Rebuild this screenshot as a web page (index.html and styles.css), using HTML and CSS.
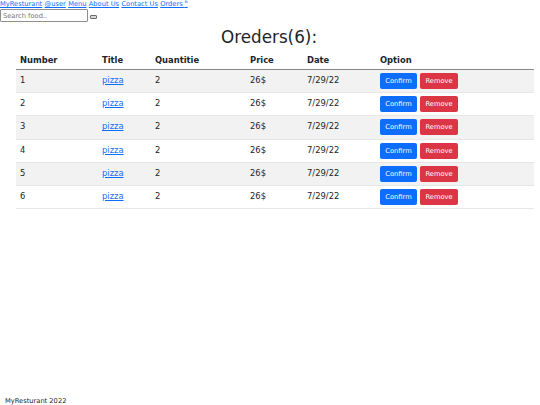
FILE: index.html
```html
<!DOCTYPE html>
<html lang="en">
<head>
<meta charset="utf-8">
<title>Orders</title>
<link rel="stylesheet" href="styles.css">
</head>
<body>
<div class="page">
  <header class="top">
    <nav class="nav">
      <a href="#">MyResturant</a>
      <a href="#">@user</a>
      <a href="#">Menu</a>
      <a href="#">About Us</a>
      <a href="#">Contact Us</a>
      <a href="#">Orders <sup>6</sup></a>
    </nav>
    <form class="search">
      <input class="search-input" type="text" placeholder="Search food..">
      <button class="search-btn" type="button"></button>
    </form>
  </header>
  <main class="main">
    <h1 class="title">Oreders(6):</h1>
    <table class="orders">
      <thead>
        <tr>
          <th class="c1">Number</th>
          <th class="c2">Title</th>
          <th class="c3">Quantitie</th>
          <th class="c4">Price</th>
          <th class="c5">Date</th>
          <th class="c6">Option</th>
        </tr>
      </thead>
      <tbody>
        <tr><td>1</td><td><a href="#">pizza</a></td><td>2</td><td>26$</td><td>7/29/22</td><td><div class="btns"><button class="btn confirm">Confirm</button><button class="btn remove">Remove</button></div></td></tr>
        <tr><td>2</td><td><a href="#">pizza</a></td><td>2</td><td>26$</td><td>7/29/22</td><td><div class="btns"><button class="btn confirm">Confirm</button><button class="btn remove">Remove</button></div></td></tr>
        <tr><td>3</td><td><a href="#">pizza</a></td><td>2</td><td>26$</td><td>7/29/22</td><td><div class="btns"><button class="btn confirm">Confirm</button><button class="btn remove">Remove</button></div></td></tr>
        <tr><td>4</td><td><a href="#">pizza</a></td><td>2</td><td>26$</td><td>7/29/22</td><td><div class="btns"><button class="btn confirm">Confirm</button><button class="btn remove">Remove</button></div></td></tr>
        <tr><td>5</td><td><a href="#">pizza</a></td><td>2</td><td>26$</td><td>7/29/22</td><td><div class="btns"><button class="btn confirm">Confirm</button><button class="btn remove">Remove</button></div></td></tr>
        <tr><td>6</td><td><a href="#">pizza</a></td><td>2</td><td>26$</td><td>7/29/22</td><td><div class="btns"><button class="btn confirm">Confirm</button><button class="btn remove">Remove</button></div></td></tr>
      </tbody>
    </table>
  </main>
  <footer class="footer">MyResturant 2022</footer>
</div>
</body>
</html>
```
FILE: styles.css
```css
html, body {
  margin: 0;
  padding: 0;
}
body {
  font-family: "DejaVu Sans", sans-serif;
  color: #212529;
  background: #fff;
  font-size: 8.4px;
}
.page {
  height: 405px;
  display: flex;
  flex-direction: column;
}
.top {
  display: flex;
  flex-direction: column;
  align-items: flex-start;
}
.nav {
  font-size: 6.7px;
  line-height: 9px;
  display: flex;
  gap: 2.3px;
}
.nav a {
  color: #0d6efd;
  text-decoration: underline;
}
.nav sup {
  font-size: 4.5px;
  vertical-align: 3px;
  line-height: 0;
}
.search {
  display: flex;
  align-items: flex-end;
  gap: 2px;
  margin: 0;
}
.search-input {
  box-sizing: border-box;
  width: 88px;
  height: 13px;
  margin: 0;
  padding: 0 2px;
  border: 1px solid #8f8f8f;
  border-radius: 1px;
  font-family: "DejaVu Sans", sans-serif;
  font-size: 6.7px;
  color: #212529;
}
.search-input::placeholder {
  color: #757575;
}
.search-btn {
  box-sizing: border-box;
  width: 7px;
  height: 4px;
  margin: 0 0 3px 0;
  padding: 0;
  border: 1px solid #6b6b6b;
  border-radius: 1px;
  background: #d9d9d9;
}
.main {
  flex: 1;
}
.title {
  margin: 3px 0 0 0;
  padding-right: 2px;
  text-align: center;
  font-weight: 400;
  font-size: 16.8px;
  line-height: 24px;
}
.orders {
  width: 518px;
  border-collapse: collapse;
  margin: 1px 0 0 16px;
}
.orders th,
.orders td {
  text-align: left;
  padding: 4px 4px 0 4px;
  line-height: 12px;
  vertical-align: top;
}
.orders th {
  font-weight: 700;
  padding-top: 4px;
  padding-bottom: 3px;
}
.orders thead tr {
  border-bottom: 1px solid #888;
}
.orders tbody tr {
  border-bottom: 1px solid #e6e6e6;
  height: 23.2px;
}
.orders tbody tr:nth-child(odd) {
  background: #f2f2f2;
}
.c1 { width: 74px; }
.c2 { width: 45px; }
.c3 { width: 87px; }
.c4 { width: 49px; }
.c5 { width: 65px; }
.orders td a {
  color: #0d6efd;
  text-decoration: underline;
}
.btns {
  display: flex;
  gap: 3px;
  margin-top: -1px;
}
.btn {
  box-sizing: border-box;
  height: 16px;
  padding: 0 5px;
  border: 0;
  border-radius: 2px;
  font-family: "DejaVu Sans", sans-serif;
  font-size: 6.7px;
  color: #fff;
  line-height: 16px;
}
.confirm {
  background: #0d6efd;
  width: 37px;
}
.remove {
  background: #dc3545;
  width: 38px;
}
.footer {
  font-size: 6.7px;
  line-height: 9px;
  padding: 0 0 0 5px;
  margin-bottom: -1px;
}
```
